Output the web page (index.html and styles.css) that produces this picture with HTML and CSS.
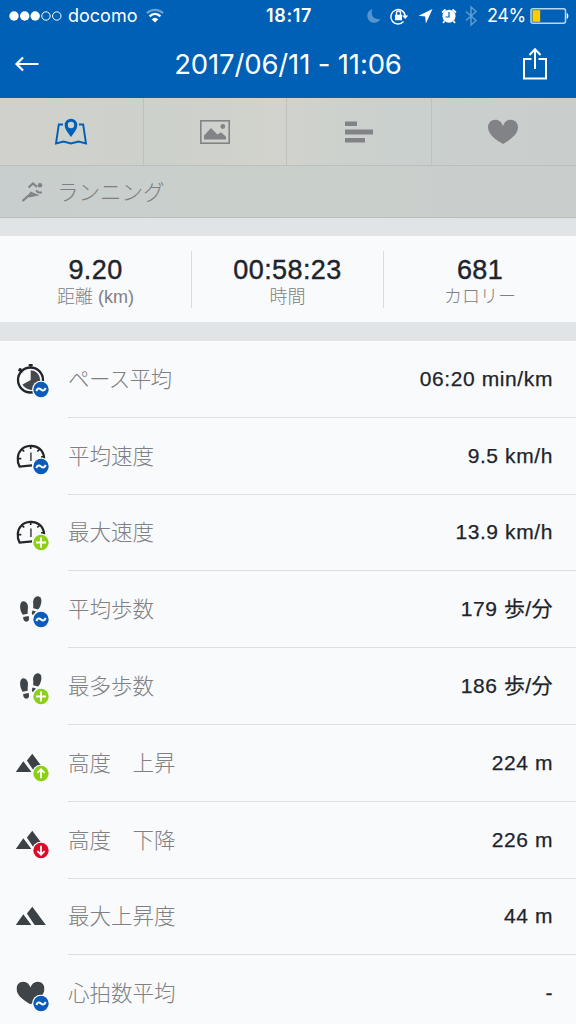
FILE: index.html
```html
<!DOCTYPE html>
<html lang="ja">
<head>
<meta charset="utf-8">
<title>2017/06/11 - 11:06</title>
<link rel="stylesheet" href="styles.css">
</head>
<body>
<svg class="defs" width="0" height="0">
  <defs>
    <symbol id="avg" viewBox="0 0 18 18"><circle cx="9" cy="9" r="9" fill="#f9fafc"/><circle cx="9" cy="9" r="7.7" fill="#0b5cb8"/><path d="M4.300 10.500C5.500 7.600 7.200 7.400 9 9s3.500 1.300 4.700-1.500" fill="none" stroke="#fff" stroke-width="2"/></symbol>
    <symbol id="plus" viewBox="0 0 18 18"><circle cx="9" cy="9" r="9" fill="#f9fafc"/><circle cx="9" cy="9" r="7.700" fill="#8bd014"/><path d="M9 4v10M4 9h10" stroke="#fff" stroke-width="2"/></symbol>
    <symbol id="up" viewBox="0 0 18 18"><circle cx="9" cy="9" r="9" fill="#f9fafc"/><circle cx="9" cy="9" r="7.700" fill="#8bd014"/><path d="M9 13.800V5M5.400 8.400L9 4.800l3.600 3.600" fill="none" stroke="#fff" stroke-width="1.800"/></symbol>
    <symbol id="down" viewBox="0 0 18 18"><circle cx="9" cy="9" r="9" fill="#f9fafc"/><circle cx="9" cy="9" r="7.700" fill="#dc0a2b"/><path d="M9 4.200V13M5.400 9.600L9 13.200l3.600-3.600" fill="none" stroke="#fff" stroke-width="1.800"/></symbol>
    <symbol id="gauge" viewBox="0 0 36 40"><path d="M18 29.300L5.600 30.600C2.600 25.500 3.300 17.500 7.200 13.700C11.500 9 20.500 8.500 25.500 12.700C28.500 15.200 30 18.700 30.200 22.500" fill="none" stroke="#20262a" stroke-width="2.200"/><path d="M16.700 9.500v3.500M8 13.300l2.200 2.200M25.500 13.300l-2.200 2.200M4 22.700h3.300M30 20.500l-3 .5" stroke="#20262a" stroke-width="1.700"/><path d="M16.900 16.500v8.500" stroke="#60656a" stroke-width="1.900"/></symbol>
    <symbol id="feet" viewBox="0 0 36 40" fill="#3e4448"><path d="M9.500 12.300C12.800 12.300 14.500 16.500 13.900 19.500C13.500 21.700 13.900 23.700 13.600 24.700L8.700 25.700C7 23.500 6 20.500 6.100 17.300C6.200 14.300 7.400 12.300 9.500 12.300Z"/><path d="M9.200 28L14.600 27C15.700 30.700 14.500 32.600 12.500 32.700C10.400 32.800 9 30.900 9.200 28Z"/><path d="M24 7.200C20.700 7 18.700 11 19.200 14.500C19.500 16.500 19 18 19.300 19.200L24 20.600C26 18.500 27.400 15 27.400 11.900C27.400 9.100 26.300 7.300 24 7.200Z"/><path d="M18.700 21.500L22 22.500L19.800 25.500L18 25.700C17.700 24 18 22.500 18.700 21.500Z"/></symbol>
    <symbol id="hills" viewBox="0 0 36 40" fill="#3b4145"><path d="M1.800 29L9.300 18.200L17.400 29ZM12.900 17.600L18.300 10.700L31.900 29H20.600Z"/></symbol>
    <symbol id="heart" viewBox="0 0 30 26"><path d="M15 25C9 21.500 0 16 0 8.300C0 3.700 3.200.7 7.400.7C11 .7 13.800 3 15 7C16.200 3 19 .7 22.600.7C26.800.7 30 3.700 30 8.300C30 16 21 21.500 15 25Z"/></symbol>
  </defs>
</svg>
<main class="screen">
  <header class="header">
    <div class="status">
      <div class="carrier">
        <svg class="signal" width="54" height="12" viewBox="0 0 54 12" fill="#fff"><circle cx="5" cy="6" r="4.700"/><circle cx="15.700" cy="6" r="4.700"/><circle cx="26.200" cy="6" r="4.700"/><g fill="none" stroke="#fff" stroke-width="1"><circle cx="37" cy="6" r="4.200"/><circle cx="47.800" cy="6" r="4.200"/></g></svg>
        <span class="docomo">docomo</span>
        <svg width="20" height="16" viewBox="0 0 20 16" fill="none" stroke="#fff" stroke-width="2.400"><path d="M.9 5.200C5.500.700 12.500.700 17.100 5.200" opacity=".4"/><path d="M3.600 8.300C6.800 5.300 11.200 5.300 14.400 8.300"/><path d="M5.700 11.300C7.800 9.300 10.200 9.300 12.300 11.300L9 14.600Z" fill="#fff" stroke="none"/></svg>
      </div>
      <span class="clock">18:17</span>
      <div class="indicators">
        <svg width="114" height="22" viewBox="0 0 114 22"><path d="M6.500 4A7 7 0 1 0 14.500 14C7.500 15.500 4 9.500 6.500 4Z" fill="#5594ce"/><g fill="none" stroke="#fff" stroke-width="1.400"><path d="M37.500 16.500A7.200 7.200 0 1 1 39.200 11"/><path d="M30.500 10V8a2 2 0 0 1 4 0v2"/></g><path d="M29 9.700h7v5.500h-7zM36 10.500h6.300l-3.100 3.600z" fill="#fff"/><path d="M66.500 4L52.500 10.700l6.700.900.700 6.900z" fill="#fff"/><circle cx="83" cy="11.200" r="6.500" fill="#fff"/><path d="M76 7.500l3.500-3M90 7.500l-3.500-3M78.500 16l-1.500 2M87.500 16l1.500 2" stroke="#fff" stroke-width="1.700"/><path d="M83 7v5H79.500" fill="none" stroke="#0060b5" stroke-width="1.200"/><path d="M100 6.500l10 9-5 4.500V2l5 4.500-10 9" fill="none" stroke="#5c9ad3" stroke-width="1.500"/></svg>
        <span class="percent">24%</span>
        <svg class="battery" width="39" height="18" viewBox="0 0 39 18"><rect x="1" y="1.700" width="34.500" height="14.600" rx="2" fill="none" stroke="#bcd5f0" stroke-width="1.500"/><path d="M2.500 3.200h7.700v11.600H2.500z" fill="#ffcc00"/><path d="M36.700 6c2.200.5 2.200 5.500 0 6z" fill="#fff"/></svg>
      </div>
    </div>
    <div class="navbar">
      <svg width="26" height="18" viewBox="0 0 26 18" fill="none" stroke="#fff" stroke-width="2.200"><path d="M24.500 9H3M9 2.500L2.500 9 9 15.500"/></svg>
      <h1 class="title">2017/06/11 - 11:06</h1>
      <svg width="26" height="34" viewBox="0 0 26 34" fill="none" stroke="#fff" stroke-width="2"><path d="M9.500 12H2v19.500h22V12h-7.500M13 22V3M7.500 8L13 2.300 18.500 8"/></svg>
    </div>
  </header>
  <nav class="tabs">
    <div class="tab"><svg width="34" height="28" viewBox="0 0 34 28"><path d="M9 6.500H4.800L2 25.500L9.500 23.500L17 25.500L24.500 23.500L32 25.500L29.200 6.500H25" fill="none" stroke="#0060b8" stroke-width="1.900"/><path fill-rule="evenodd" d="M17 19C14 14.500 10.700 11.500 10.700 7a6.300 6.300 0 0 1 12.600 0C23.300 11.500 20 14.500 17 19ZM17 3.800a3.200 3.200 0 1 0 0 6.400a3.200 3.200 0 0 0 0-6.400Z" fill="#0060b8"/></svg></div>
    <div class="tab"><svg width="30" height="24" viewBox="0 0 30 24"><rect x=".8" y=".8" width="28.400" height="22.400" fill="none" stroke="#828386" stroke-width="1.600"/><path d="M4 19.500v-4L11 8l6.500 6.500 3.500-2.300 5 4.500v2.800z" fill="#828386"/><circle cx="22.800" cy="6.500" r="2.400" fill="#828386"/></svg></div>
    <div class="tab"><svg width="28" height="22" viewBox="0 0 28 22" fill="#828386"><path d="M0 .5h12v4.500H0zM0 8.500h28v5H0zM0 17h20v4.500H0z"/></svg></div>
    <div class="tab"><svg width="30" height="26" fill="#828386"><use href="#heart"/></svg></div>
  </nav>
  <div class="activity">
    <svg width="22" height="22" viewBox="0 0 22 22" fill="none" stroke="#828386" stroke-width="2.200"><circle cx="18" cy="4.200" r="2.300" fill="#828386" stroke="none"/><path d="M6.500 6.500L11 2.500 15 6M.5 20L10 11.700M7 15.500l7-1.500-6-2.500M14 9.500l2.500 2H20"/></svg>
    <span class="activity-name">ランニング</span>
  </div>
  <section class="stats">
    <div class="stat"><b class="figure">9.20</b><span class="caption">距離 (km)</span></div>
    <div class="stat"><b class="figure">00:58:23</b><span class="caption">時間</span></div>
    <div class="stat"><b class="figure">681</b><span class="caption">カロリー</span></div>
  </section>
  <section class="list">
    <div class="row"><svg class="icon" viewBox="0 0 36 40"><circle cx="16.500" cy="21" r="12.500" fill="none" stroke="#20262a" stroke-width="2.300"/><path d="M16.700 5v4M14.700 6h4M5 9.700l3.500 3.500M4.500 12l3-2.300" stroke="#20262a" stroke-width="1.800"/><path d="M16.700 11.200A9.700 9.700 0 0 1 26.200 21V29L22 30.700C17 31.500 11.500 30.500 8.500 25.500L16.700 21Z" fill="#45494d"/><use href="#avg" x="18" y="21.500" width="18" height="18"/></svg><div class="cell"><span class="name name-kana">ペース平均</span><span class="value">06:20 min/km</span></div></div>
    <div class="row"><svg class="icon" viewBox="0 0 36 40"><use href="#gauge" width="36" height="40"/><use href="#avg" x="18" y="21.500" width="18" height="18"/></svg><div class="cell"><span class="name">平均速度</span><span class="value">9.5 km/h</span></div></div>
    <div class="row"><svg class="icon" viewBox="0 0 36 40"><use href="#gauge" width="36" height="40"/><use href="#plus" x="18" y="21.500" width="18" height="18"/></svg><div class="cell"><span class="name">最大速度</span><span class="value">13.9 km/h</span></div></div>
    <div class="row"><svg class="icon" viewBox="0 0 36 40"><use href="#feet" width="36" height="40"/><use href="#avg" x="18" y="21.500" width="18" height="18"/></svg><div class="cell"><span class="name">平均歩数</span><span class="value">179 <span class="unit">歩/分</span></span></div></div>
    <div class="row"><svg class="icon" viewBox="0 0 36 40"><use href="#feet" width="36" height="40"/><use href="#plus" x="18" y="21.500" width="18" height="18"/></svg><div class="cell"><span class="name">最多歩数</span><span class="value">186 <span class="unit">歩/分</span></span></div></div>
    <div class="row"><svg class="icon" viewBox="0 0 36 40"><use href="#hills" width="36" height="40"/><use href="#up" x="18" y="21.500" width="18" height="18"/></svg><div class="cell"><span class="name">高度　上昇</span><span class="value">224 m</span></div></div>
    <div class="row"><svg class="icon" viewBox="0 0 36 40"><use href="#hills" width="36" height="40"/><use href="#down" x="18" y="21.500" width="18" height="18"/></svg><div class="cell"><span class="name">高度　下降</span><span class="value">226 m</span></div></div>
    <div class="row"><svg class="icon" viewBox="0 0 36 40"><use href="#hills" width="36" height="40"/></svg><div class="cell"><span class="name">最大上昇度</span><span class="value">44 m</span></div></div>
    <div class="row"><svg class="icon" viewBox="0 0 36 40"><use href="#heart" x="2.500" y="8" width="28" height="24.300" fill="#3e4448"/><use href="#avg" x="18" y="21.500" width="18" height="18"/></svg><div class="cell"><span class="name">心拍数平均</span><span class="value">-</span></div></div>
  </section>
</main>
</body>
</html>
```
FILE: styles.css
```css
* { box-sizing: border-box; }
body { margin: 0; background: #f9fafc; font-family: "Liberation Sans", "Noto Sans CJK JP", sans-serif; }
svg { display: block; flex: none; }
.defs { display: none; }
.screen { width: 576px; height: 1024px; overflow: hidden; }

.header { height: 98px; background: #0060b5; color: #fff; font-family: Inter, sans-serif; }
.status { height: 32px; display: grid; grid-template-columns: 1fr auto 1fr; align-items: center; padding: 0 7px 0 9px; font-size: 18px; line-height: 32px; }
.carrier { display: flex; align-items: center; }
.docomo { width: 70px; margin: 0 8px 0 5px; }
.clock { font-weight: 600; letter-spacing: 0.6px; }
.indicators { display: flex; align-items: center; justify-content: flex-end; }
.percent { margin: 0 4px 0 7px; letter-spacing: -0.3px; }
.navbar { height: 66px; display: grid; grid-template-columns: 26px 1fr 26px; align-items: center; padding: 0 28px 2px 14px; }
.title { margin: 0; padding-left: 14px; text-align: center; font-size: 27.5px; font-weight: 400; line-height: 34px; letter-spacing: -0.15px; white-space: nowrap; }

.tabs { height: 68px; display: grid; grid-template-columns: 143.5px 143.5px 144.5px 1fr; background: linear-gradient(90deg, #d1d1cc 0%, #cdd1cb 28%, #d1d3cc 48%, #cad0cd 68%, #c9cecd 100%); border-bottom: 1px solid #bbc0be; }
.tab { display: flex; align-items: center; justify-content: center; border-right: 1px solid #bdc2bf; }
.tab:last-child { padding-right: 1px; border-right: 0; }
.activity { height: 52px; display: flex; align-items: center; gap: 13px; padding: 0 22px; background: linear-gradient(90deg, #c8cecd, #c9d0cb 50%, #c9cdcc); border-bottom: 1px solid #b9bfbd; color: #7e8082; }
.activity-name { padding-bottom: 3px; font: 300 21.5px/49px "Noto Sans CJK JP", sans-serif; }

.stats { height: 123px; display: grid; grid-template-columns: repeat(3, 1fr); padding: 15px 0; background: #f9fafc; border: solid #e0e4e7; border-width: 18px 0 19px; }
.stat { display: flex; flex-direction: column; align-items: center; border-right: 1px solid #d9dcdf; }
.stat:last-child { border-right: 0; }
.figure { padding-top: 4px; font-size: 27px; line-height: 30px; font-weight: 400; color: #20242a; letter-spacing: 0.4px; -webkit-text-stroke: 0.4px #20242a; }
.caption { padding-top: 1px; font-size: 18px; font-weight: 300; line-height: 22px; color: #7e8083; }

.list { color: #7e8083; }
.row { height: 76.8px; display: flex; align-items: center; padding-left: 14px; }
.icon { width: 36px; height: 40px; margin-bottom: 1px; }
.cell { flex: 1; align-self: stretch; display: flex; align-items: center; justify-content: space-between; margin-left: 18px; padding-right: 23px; border-bottom: 1px solid #dcdfe2; }
.name { padding-bottom: 2px; font: 300 21.5px/32px "Noto Sans CJK JP", sans-serif; }
.name-kana { letter-spacing: -0.6px; }
.value { font-size: 21px; line-height: 30px; color: #20242a; letter-spacing: 0.6px; -webkit-text-stroke: 0.25px #20242a; }
.unit { letter-spacing: 0.4px; }
```
